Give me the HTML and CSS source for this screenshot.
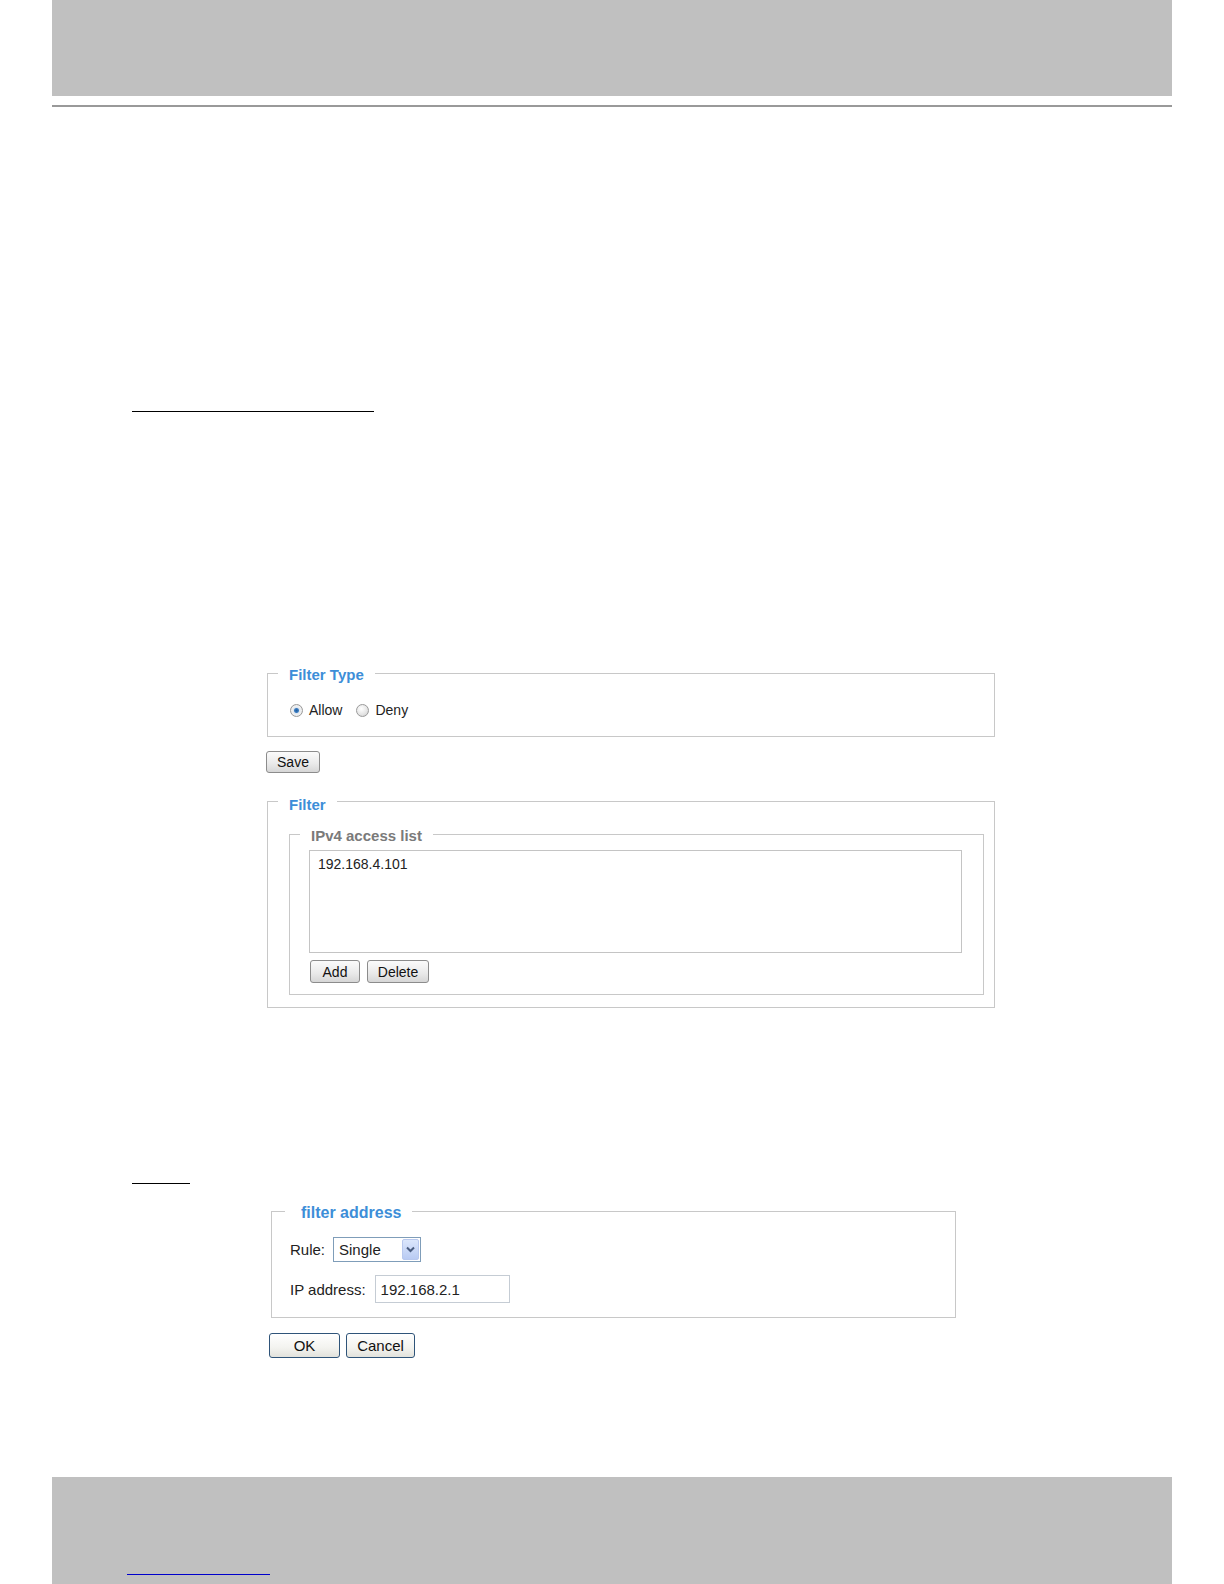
FILE: index.html
```html
<!DOCTYPE html>
<html lang="en">

<head>
  <meta charset="UTF-8">
  <meta name="viewport" content="width=device-width, initial-scale=1.0">
  <title>Access List</title>
  <link rel="stylesheet" href="styles.css">
</head>
<body>
  <div class="page">
    <div class="header"></div>
    <div class="header-rule"></div>

    <div class="heading heading-long"></div>

    <fieldset class="box box-type">
      <legend>Filter Type</legend>
      <div class="box-body radios">
        <label class="radio"><input type="radio" name="type" checked>Allow</label>
        <label class="radio"><input type="radio" name="type">Deny</label>
      </div>
    </fieldset>
    <button class="btn btn-save">Save</button>

    <fieldset class="box box-filter">
      <legend>Filter</legend>
      <div class="box-body filter-body">
        <fieldset class="box box-list">
          <legend>IPv4 access list</legend>
          <div class="box-body list-body">
            <div class="listbox">
              <div class="list-item">192.168.4.101</div>
            </div>
            <div class="btn-row">
              <button class="btn btn-add">Add</button>
              <button class="btn btn-delete">Delete</button>
            </div>
          </div>
        </fieldset>
      </div>
    </fieldset>

    <div class="heading heading-short"></div>

    <fieldset class="box box-address">
      <legend>filter address</legend>
      <div class="box-body address-body">
        <div class="field">
          <span class="field-label">Rule:</span>
          <div class="select">
            <span class="select-value">Single</span>
            <span class="select-arrow">
              <svg width="9" height="7" viewBox="0 0 9 7">
                <path d="M1 1.5 L4.5 5 L8 1.5" fill="none" stroke="#4a5d80" stroke-width="2"/>
              </svg>
            </span>
          </div>
        </div>
        <div class="field">
          <span class="field-label">IP address:</span>
          <input class="text-input" type="text" value="192.168.2.1">
        </div>
      </div>
    </fieldset>
    <div class="btn-row dialog-row">
      <button class="btn btn-dialog btn-ok">OK</button>
      <button class="btn btn-dialog btn-cancel">Cancel</button>
    </div>

    <div class="footer">
      <a class="footer-link" href="#"></a>
    </div>
  </div>
</body>
</html>
```

FILE: styles.css
```css
* {
  box-sizing: border-box;
  margin: 0;
  padding: 0;
}

body {
  background-color: #fff;
  font-family: "Liberation Sans", Arial, sans-serif;
  color: #222;
}

.page {
  width: 1120px;
  margin: 0 auto;
}

.header {
  height: 96px;
  background-color: #c0c0c0;
}

.header-rule {
  height: 2px;
  margin-top: 9px;
  background-color: #999;
}

.heading {
  margin-left: 80px;
  border-bottom: 1px solid #000;
}

.heading-long {
  width: 242px;
  margin-top: 304px;
}

.heading-short {
  width: 58px;
  margin-top: 175px;
}

/* fieldsets: legend text sits a little below the border line */
.box {
  border: 1px solid #c8c8c8;
  padding: 0;
  min-width: 0;
}

.box legend {
  margin-left: 10px;
  padding: 4px 11px 0;
  font-size: 15px;
  font-weight: bold;
  line-height: 18px;
  color: #3d8ed8;
}

.box-type,
.box-filter {
  width: 728px;
  margin-left: 215px;
}

.box-type {
  margin-top: 250px;
}

.radios {
  display: flex;
  align-items: center;
  gap: 14px;
  height: 20px;
  box-sizing: content-box;
  padding: 16px 22px 16px;
  font-size: 14px;
}

.radio {
  display: flex;
  align-items: center;
  gap: 6px;
}

.radio input {
  appearance: none;
  width: 13px;
  height: 13px;
  border: 1px solid #9a9a9a;
  border-radius: 50%;
  background: radial-gradient(circle at 40% 35%, #fff 0%, #e4e4e4 60%, #c8c8c8 100%);
}

.radio input:checked {
  background: radial-gradient(circle, #1f5d9e 0, #3b7cc0 2px, #dfe6ee 3px, #f2f2f2 60%, #cfcfcf 100%);
}

.btn {
  font-family: "Liberation Sans", Arial, sans-serif;
  font-size: 14px;
  color: #111;
  border: 1px solid #8c8c8c;
  border-radius: 3px;
  background: linear-gradient(#fbfbfb, #e9e9e9 60%, #d6d6d6);
}

.btn-save {
  display: block;
  width: 54px;
  height: 22px;
  margin: 14px 0 0 214px;
}

.box-filter {
  margin-top: 15px;
}

.box-filter > legend {
  padding-top: 8px;
}

.filter-body {
  padding: 9px 10px 12px 21px;
}

.box-list legend {
  color: #7a7a7a;
}

.list-body {
  padding: 5px 21px 11px 19px;
}

.listbox {
  height: 103px;
  border: 1px solid #c4c4c4;
  padding: 5px 8px;
  font-size: 14px;
  line-height: 16px;
}

.btn-row {
  display: flex;
  gap: 7px;
  margin-top: 7px;
  padding-left: 1px;
}

.btn-add {
  width: 50px;
  height: 23px;
}

.btn-delete {
  width: 62px;
  height: 23px;
}

/* filter address dialog */
.box-address {
  width: 685px;
  margin: 15px 0 0 219px;
}

.box-address legend {
  margin-left: 13px;
  padding: 4px 11px 0 16px;
  font-size: 16px;
  line-height: 20px;
}

.address-body {
  display: flex;
  flex-direction: column;
  gap: 13px;
  padding: 14px 18px 14px;
  font-size: 15px;
}

.field {
  display: flex;
  align-items: center;
}

.field-label {
  margin-right: 8px;
}

.select {
  display: flex;
  align-items: center;
  justify-content: space-between;
  width: 88px;
  height: 25px;
  border: 1px solid #7f9db9;
  background-color: #fff;
}

.select-value {
  padding-left: 5px;
}

.select-arrow {
  display: flex;
  align-items: center;
  justify-content: center;
  width: 17px;
  height: 21px;
  margin-right: 1px;
  border: 1px solid #b8c8ee;
  border-radius: 2px;
  background: linear-gradient(#dbe6fc, #b9cbf3);
}

.text-input {
  width: 135px;
  height: 28px;
  margin-left: 1px;
  padding: 0 5px;
  border: 1px solid #c5ccd4;
  font-family: "Liberation Sans", Arial, sans-serif;
  font-size: 15px;
  color: #222;
}

.dialog-row {
  margin: 15px 0 0 217px;
  padding-left: 0;
  gap: 6px;
}

.btn-dialog {
  height: 25px;
  font-size: 15px;
  border-color: #2f5479;
  background: linear-gradient(#fff, #f3f3ef 60%, #e2e2dc);
}

.btn-ok {
  width: 71px;
}

.btn-cancel {
  width: 69px;
}

.footer {
  height: 107px;
  margin-top: 119px;
  padding-top: 97px;
  background-color: #c0c0c0;
}

.footer-link {
  display: block;
  width: 143px;
  margin-left: 75px;
  border-bottom: 1px solid #0000cc;
}
```
